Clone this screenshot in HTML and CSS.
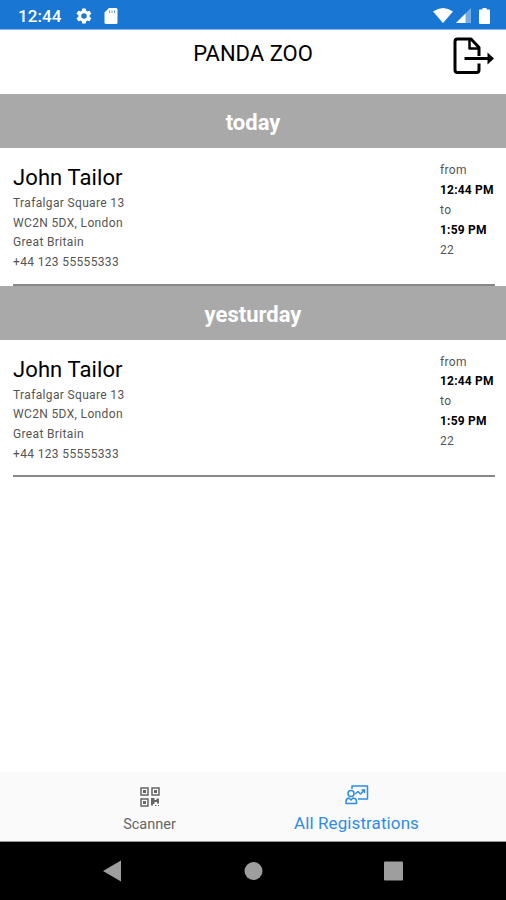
FILE: index.html
```
<!DOCTYPE html>
<html lang="en">
<head>
  <meta charset="utf-8" />
  <title>Panda Zoo</title>
  <link rel="stylesheet" href="styles.css">
</head>
<body>
  <div class="status-bar">
    <span class="clock">12:44</span>
    <svg class="gear" width="18" height="18" viewBox="0 0 24 24"><path fill="#fff" fill-rule="evenodd" d="M19.4 13a7.500 7.500 0 0 0 0-2l2.100-1.600a.5.5 0 0 0 .1-.6l-2-3.500a.5.5 0 0 0-.6-.2l-2.500 1a7.300 7.300 0 0 0-1.700-1l-.4-2.700a.5.5 0 0 0-.5-.4h-4a.5.5 0 0 0-.5.4L9 5.100a7.300 7.300 0 0 0-1.700 1l-2.500-1a.5.5 0 0 0-.6.2l-2 3.500a.5.5 0 0 0 .1.600L4.600 11a7.500 7.500 0 0 0 0 2l-2.300 1.600a.5.5 0 0 0-.1.600l2 3.500c.1.200.4.300.6.200l2.500-1a7.300 7.300 0 0 0 1.700 1l.4 2.700c0 .2.200.4.500.4h4c.300 0 .5-.2.500-.4l.4-2.700a7.300 7.300 0 0 0 1.700-1l2.500 1c.2.100.5 0 .6-.2l2-3.500a.5.5 0 0 0-.1-.6zM12 15.600a3.600 3.600 0 1 1 0-7.200 3.600 3.600 0 0 1 0 7.200z"/></svg>
    <svg width="14" height="16" viewBox="0 0 14 16"><path fill="#fff" d="M5 0h7a1.500 1.500 0 0 1 1.500 1.500v13A1.500 1.500 0 0 1 12 16H2a1.500 1.500 0 0 1-1.500-1.500V4.500z"/><path stroke="#1976d2" stroke-width="1" opacity=".7" d="M5.500 2.500v2.500M8 2.500v2.500M10.500 2.500v2.500"/></svg>
    <div class="signals">
      <svg width="20" height="15" viewBox="0 0 20 15"><path fill="#fff" d="M0 3.500Q10-3.500 20 3.500L10 15z"/></svg>
      <svg width="15" height="15" viewBox="0 0 15 15"><path fill="#fff" opacity=".4" d="M15 0v15H0z"/><path fill="#fff" d="M9.500 5.500V15H0z"/></svg>
      <svg class="battery" width="11" height="16" viewBox="0 0 11 16"><path fill="#fff" d="M3.500 0h4v1.500H10q1 0 1 1V15q0 1-1 1H1q-1 0-1-1V2.500q0-1 1-1h2.500z"/></svg>
    </div>
  </div>

  <div class="header">
    <h1>PANDA ZOO</h1>
    <svg class="export" width="42" height="38" viewBox="0 0 42 38"><g fill="none" stroke="#000" stroke-width="3" stroke-linejoin="round"><path d="M26 26.500V33q0 2.500-2.500 2.500h-19Q2 35.500 2 33V4.500Q2 2 4.500 2H18l8 8.500V19"/><path stroke-width="2.500" d="M16.500 2.500V11.500H26"/><path d="M11.500 21.500H36"/></g><path d="M34.500 15.500l6.500 6-6.500 6z"/></svg>
  </div>

  <h2 class="day">today</h2>
  <div class="visit">
    <div>
      <h3>John Tailor</h3>
      <p>Trafalgar Square 13</p>
      <p>WC2N 5DX, London</p>
      <p>Great Britain</p>
      <p>+44 123 55555333</p>
    </div>
    <div class="time">
      <p>from</p>
      <p><b>12:44 PM</b></p>
      <p>to</p>
      <p><b>1:59 PM</b></p>
      <p>22</p>
    </div>
  </div>

  <h2 class="day">yesturday</h2>
  <div class="visit">
    <div>
      <h3>John Tailor</h3>
      <p>Trafalgar Square 13</p>
      <p>WC2N 5DX, London</p>
      <p>Great Britain</p>
      <p>+44 123 55555333</p>
    </div>
    <div class="time">
      <p>from</p>
      <p><b>12:44 PM</b></p>
      <p>to</p>
      <p><b>1:59 PM</b></p>
      <p>22</p>
    </div>
  </div>

  <div class="tabs">
    <div class="tab scanner">
      <svg width="20" height="20" viewBox="0 0 20 20"><g fill="none" stroke="#666" stroke-width="1.500"><path d="M1 1h7v7H1zM12 1h7v7h-7zM1 12h7v7H1z"/></g><path fill="#666" d="M3 3h3v3H3zM14 3h3v3h-3zM3 14h3v3H3zM11 11h3.500v2h2v-1.500H19v5h-2v-1.500h-2.500v2H13v1.500h-2zM15 18h1.500v1H15zM18 18h1v1h-1z"/></svg>
      <span>Scanner</span>
    </div>
    <div class="tab active">
      <svg width="24" height="20" viewBox="0 0 24 20"><g fill="none" stroke="#2f8de4" stroke-width="1.500" stroke-linejoin="round"><path d="M7 4V1h15.500v13H13"/><circle cx="6" cy="8.500" r="3"/><path d="M1 18.500v-2q0-3 3-3.500l2 2 2-2q3.500.5 3.500 3.500v2z"/><path d="M10 9l3-2.500 2.500 2.500 4-4M16.500 5h3v3"/></g></svg>
      <span>All Registrations</span>
    </div>
  </div>

  <div class="nav-bar">
    <svg width="506" height="58" viewBox="0 0 506 58"><g fill="#9e9e9e"><path d="M103 29l18-10.500v21z"/><circle cx="253.500" cy="29" r="9"/><rect x="384" y="19.500" width="19" height="19" rx="1"/></g></svg>
  </div>
</body>
</html>
```
FILE: styles.css
```
body {
  display: flex;
  flex-direction: column;
  height: 900px;
  margin: 0;
  background-color: #fff;
  color: #000;
  font-family: Roboto, sans-serif;
  overflow: hidden;
}

h1, h2, h3, p {
  margin: 0;
  font-weight: normal;
}

svg {
  display: block;
  flex: none;
}

.status-bar {
  display: flex;
  align-items: center;
  flex: none;
  height: 30px;
  padding: 2px 16px 0 18px;
  box-sizing: border-box;
  background-color: #1976d2;
  border-bottom: 1px solid #8bb8ea;
  color: #fff;
}

.clock {
  width: 57px;
  font-size: 17px;
  font-weight: 500;
  letter-spacing: 0.1px;
}

.gear {
  margin-right: 11px;
}

.signals {
  display: flex;
  align-items: center;
  margin-left: auto;
  gap: 3px;
}

.battery {
  margin-left: 5px;
}

.header {
  display: flex;
  flex: none;
  height: 64px;
  padding: 7px 11px 0 53px;
  box-sizing: border-box;
}

.header h1 {
  flex: 1;
  font-size: 22px;
  line-height: 34px;
  text-align: center;
}

.day {
  flex: none;
  height: 54px;
  background-color: #a9a9a9;
  color: #fff;
  font-size: 22px;
  font-weight: bold;
  line-height: 57px;
  text-align: center;
}

.visit {
  display: flex;
  flex: none;
  justify-content: space-between;
  height: 137.500px;
  margin: 0 11px 0 13px;
  box-sizing: border-box;
  border-bottom: 2px solid #888;
}

.visit h3 {
  padding: 15px 0 2px;
  font-size: 22px;
  line-height: 29px;
  letter-spacing: 0.1px;
}

.visit p {
  color: #555;
  font-size: 12px;
  line-height: 19.700px;
  letter-spacing: 0.35px;
}

.time {
  width: 55px;
  padding-top: 13px;
  white-space: nowrap;
}

.visit .time p {
  line-height: 19.900px;
}

.time b {
  color: #000;
  letter-spacing: 0.2px;
}

.tabs {
  display: flex;
  flex: none;
  height: 70px;
  margin-top: auto;
  padding: 0 46px;
  box-sizing: border-box;
  background-color: #fafafa;
  border-bottom: 1px solid #999;
}

.tab {
  display: flex;
  flex: 1;
  flex-direction: column;
  align-items: center;
  padding-top: 13px;
  color: #666;
  font-size: 14.500px;
}

.tab span {
  padding-top: 9px;
}

.scanner {
  padding-top: 15px;
}

.active {
  color: #2f8de4;
  font-size: 17px;
}

.active span {
  padding-top: 8px;
  letter-spacing: 0.1px;
}

.nav-bar {
  flex: none;
  height: 58px;
  background-color: #000;
}
```
